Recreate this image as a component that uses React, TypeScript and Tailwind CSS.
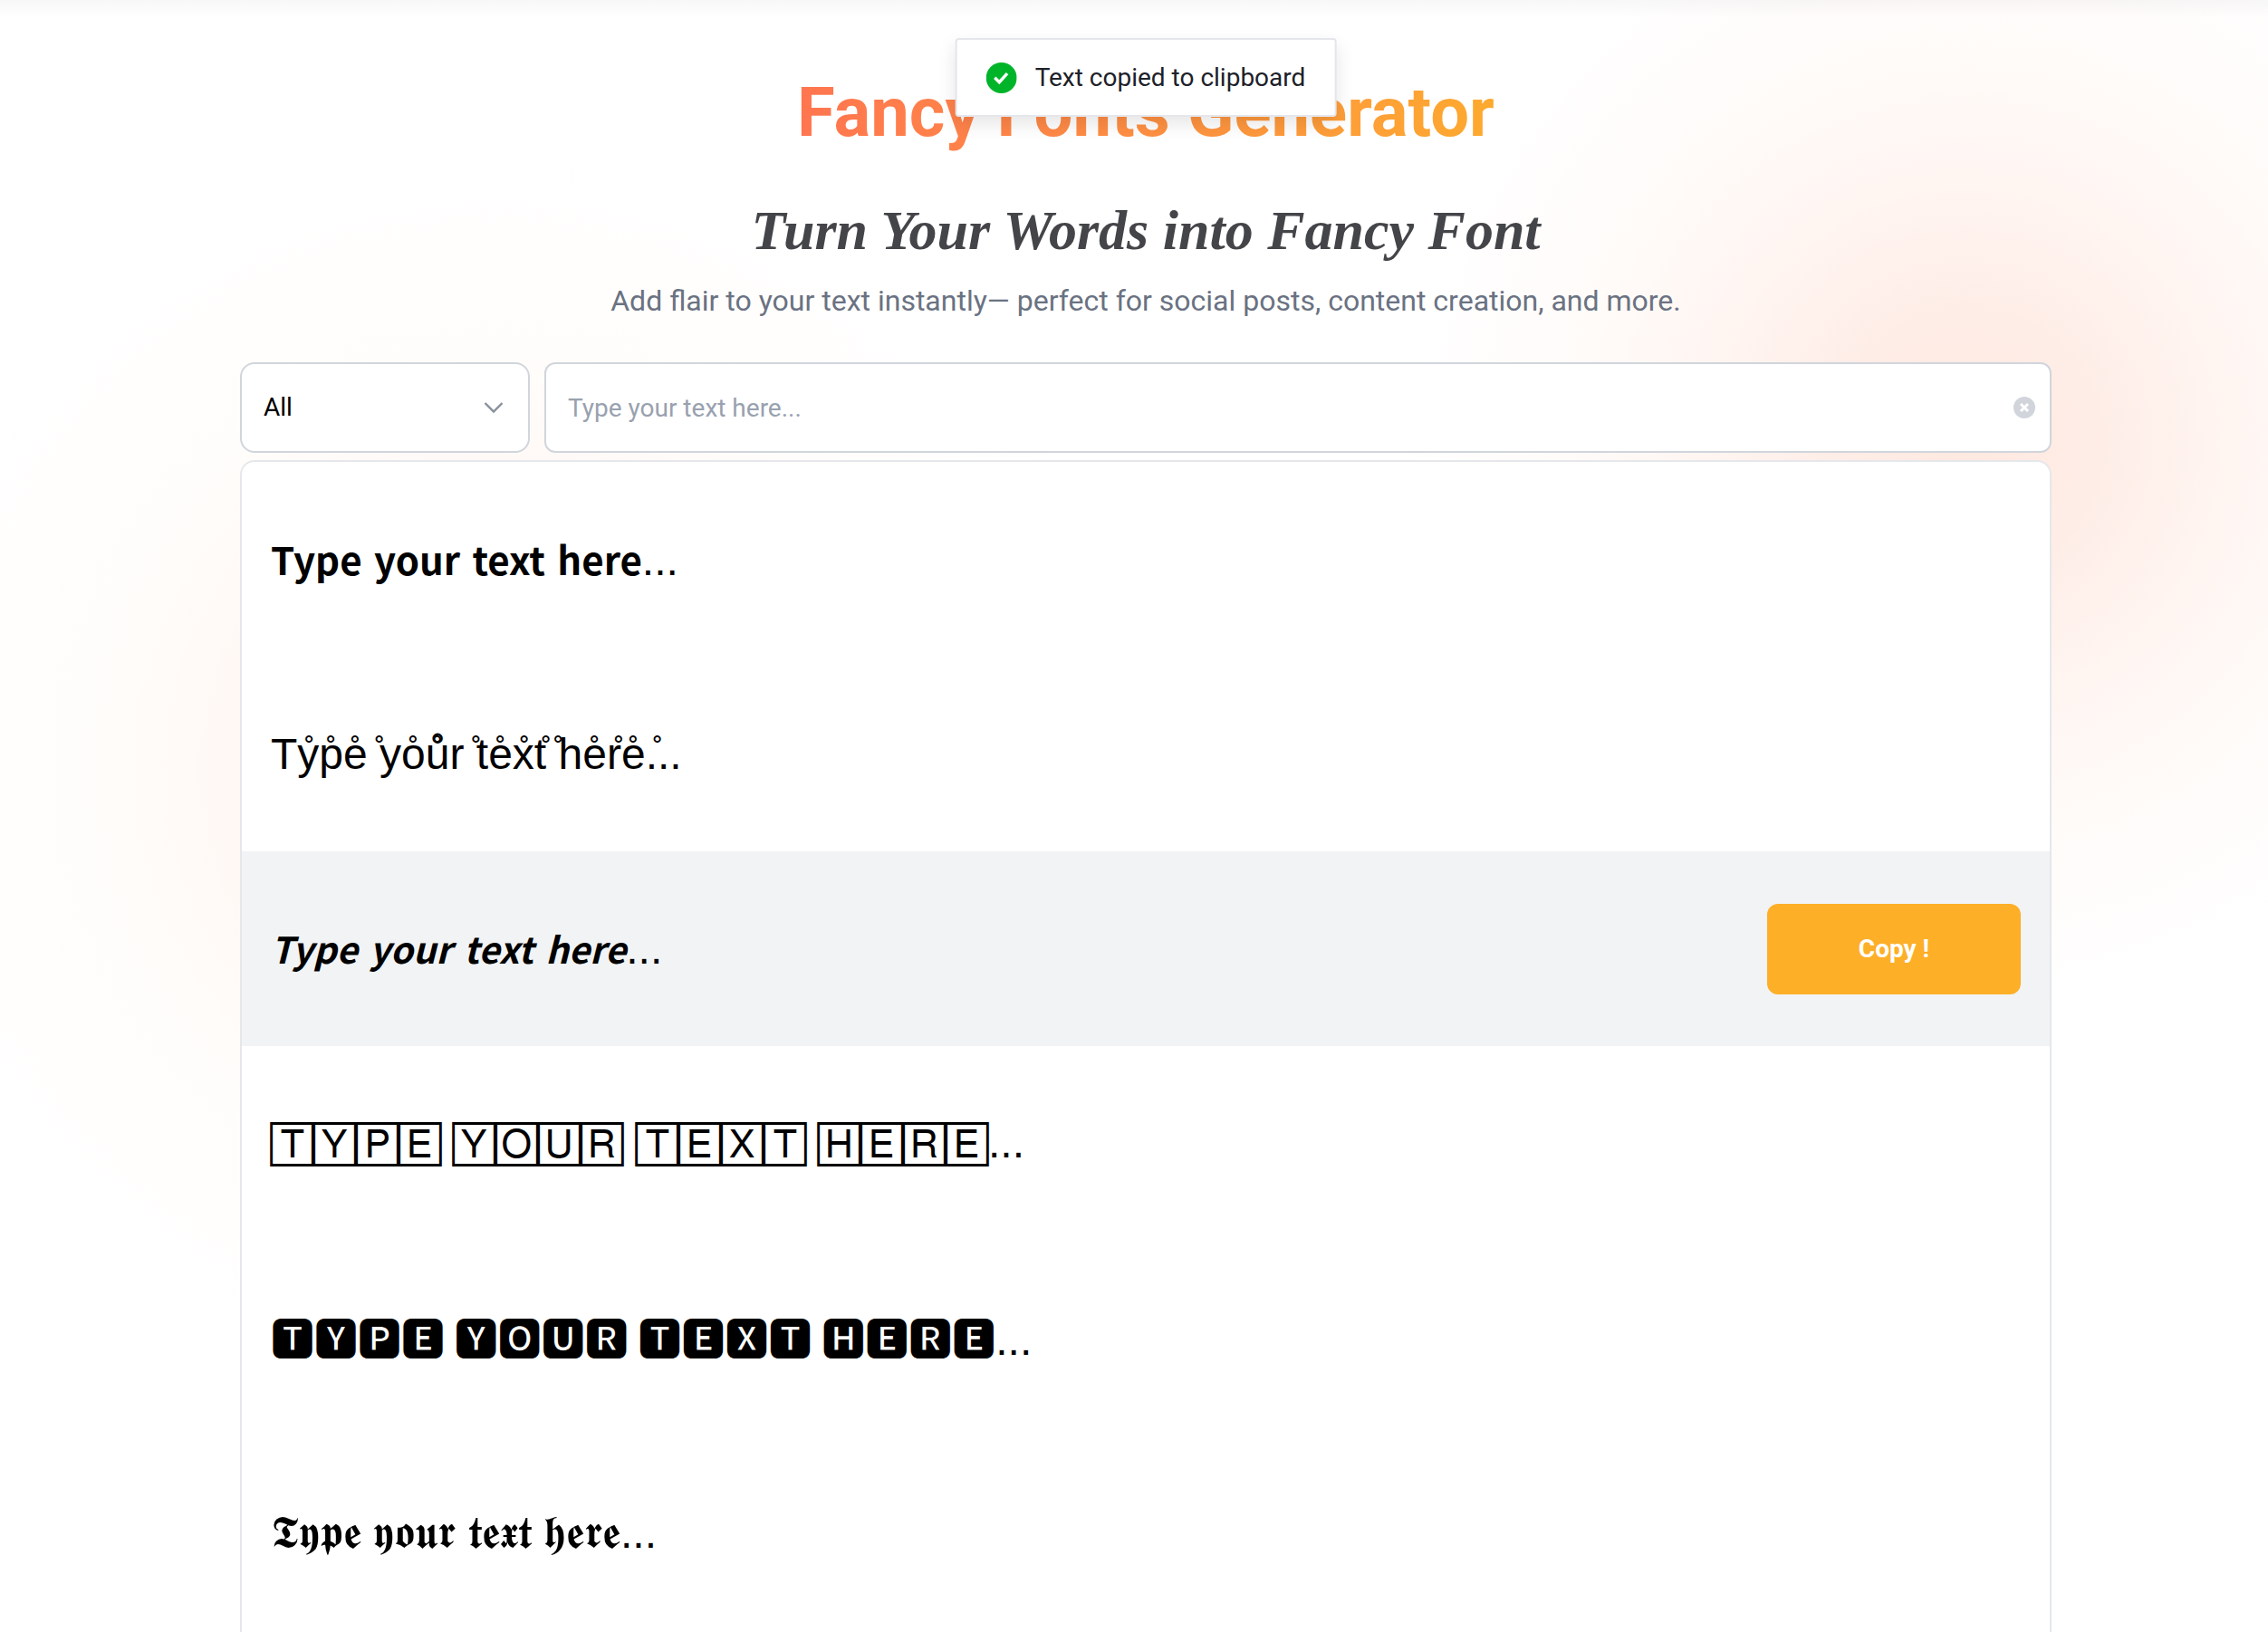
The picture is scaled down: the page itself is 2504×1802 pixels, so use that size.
import React from 'react';

const PLACEHOLDER = 'Type your text here...';

const CheckIcon = () => (
  <svg viewBox="0 0 34 34" className="size-[34px] shrink-0" aria-hidden="true">
    <circle cx="17" cy="17" r="17" fill="#00b42a" />
    <path d="M9.6 16.8l5 4.9 8.8-9.6" fill="none" stroke="#fff" strokeWidth="3.4" />
  </svg>
);

const ClearIcon = () => (
  <svg viewBox="0 0 24 24" className="size-6" aria-hidden="true">
    <circle cx="12" cy="12" r="12" fill="#d1d5db" />
    <path d="M8 8l8 8M16 8l-8 8" stroke="#fff" strokeWidth="3" />
  </svg>
);

const ChevronIcon = () => (
  <svg viewBox="0 0 24 24" className="size-6" aria-hidden="true">
    <path d="M2.5 7l9.5 9.5L21.5 7" fill="none" stroke="#86909c" strokeWidth="2.4" />
  </svg>
);

// styles the words only, so the gaps between them keep the row's own width
const Words: React.FC<{ text: string; className: string }> = ({ text, className }) => (
  <>
    {text.split(' ').map((word, i) => (
      <React.Fragment key={i}>
        {i > 0 && ' '}
        <span className={className}>{word}</span>
      </React.Fragment>
    ))}
  </>
);

// every plain letter carries a small ring that hangs over the start of the next one
const RingText: React.FC<{ text: string }> = ({ text }) => (
  <>
    {Array.from(text).map((char, i) => (
      <React.Fragment key={i}>
        {char}
        {/[a-zA-Z]/.test(char) && (
          <span className="inline-block w-0 align-[10px] indent-2 text-[34px] leading-none">˚</span>
        )}
      </React.Fragment>
    ))}
  </>
);

interface FontStyle {
  id: string;
  sample: React.ReactNode;
}

const styles: FontStyle[] = [
  {
    id: 'bold-sans',
    sample: <Words text="Type your text here" className="text-[42px] font-bold font-['Noto_Sans_CJK_SC',sans-serif]" />,
  },
  { id: 'ring', sample: <RingText text="Type yoůr text here" /> },
  {
    id: 'bold-italic',
    sample: (
      <Words text="Type your text here" className="text-[40px] font-bold italic font-['Noto_Sans_CJK_SC',sans-serif]" />
    ),
  },
  { id: 'square', sample: <Words text="🅃🅈🄿🄴 🅈🄾🅄🅁 🅃🄴🅇🅃 🄷🄴🅁🄴" className="text-[43px]" /> },
  {
    id: 'square-filled',
    sample: <span className="font-['Noto_Sans_CJK_SC',sans-serif]">🆃🆈🅿🅴 🆈🅾🆄🆁 🆃🅴🆇🆃 🅷🅴🆁🅴</span>,
  },
  { id: 'fraktur', sample: <Words text="𝕿𝖞𝖕𝖊 𝖞𝖔𝖚𝖗 𝖙𝖊𝖝𝖙 𝖍𝖊𝖗𝖊" className="text-[50px]" /> },
];

const FontRow: React.FC<{ style: FontStyle; active: boolean }> = ({ style, active }) => (
  <li className={`flex h-[215px] items-center justify-between px-8 ${active ? 'bg-[#f2f3f5]' : ''}`}>
    <p className="text-5xl leading-[56px] text-black font-['Liberation_Sans',sans-serif]">{style.sample}...</p>
    {active && (
      <button type="button" className="h-[100px] w-[280px] rounded-xl bg-[#fdaf28] text-[28px] font-bold text-white">
        Copy !
      </button>
    )}
  </li>
);

const Toast = () => (
  <div
    role="status"
    className="absolute top-[42px] left-1/2 flex h-[87px] -translate-x-1/2 items-center gap-5 rounded border-2 border-[#e5e6eb] bg-white px-8 text-[28px] whitespace-nowrap text-[#1d2129] shadow-[0_8px_20px_rgba(0,0,0,0.1)]"
  >
    <CheckIcon />
    Text copied to clipboard
  </div>
);

export default function App() {
  return (
    <div className="min-h-screen overflow-hidden bg-white bg-[radial-gradient(circle_620px_at_86.7%_490px,#ffe9e0_0%,#feede7_24%,#fff5f1_46%,#fffbf9_70%,#ffffff00_100%),radial-gradient(circle_700px_at_22%_850px,#fff1ed_0%,#fff8f5_42%,#fffdfb_66%,#ffffff00_100%)] font-['Roboto',sans-serif]">
      <div className="bg-linear-to-b from-black/3 to-transparent to-[20px] pl-[26px]">
        <div className="relative">
          <main className="mx-auto flex max-w-[2000px] flex-col pt-20">
            <header className="flex flex-col items-center text-center">
              <h1 className="bg-linear-to-r from-[#ff754f] to-[#fda92e] bg-clip-text text-[76px] leading-[88px] font-bold text-transparent">
                Fancy Fonts Generator
              </h1>
              <h2 className="mt-14 text-[62px] leading-[60px] font-bold italic text-[#444549] font-['Liberation_Serif',serif]">
                Turn Your Words into Fancy Font
              </h2>
              <p className="mt-7 text-[32px] leading-10 text-gray-500">
                Add flair to your text instantly— perfect for social posts, content creation, and more.
              </p>
            </header>

            <div className="mt-12 flex gap-4 text-[28px]">
              <div className="relative w-80 shrink-0">
                <select
                  aria-label="Category"
                  className="h-[100px] w-full appearance-none rounded-2xl border-2 border-gray-300 bg-white px-6 text-black"
                >
                  <option>All</option>
                </select>
                <span className="pointer-events-none absolute inset-y-0 right-7 flex items-center">
                  <ChevronIcon />
                </span>
              </div>
              <div className="relative flex-1">
                <input
                  type="text"
                  aria-label="Your text"
                  placeholder={PLACEHOLDER}
                  className="h-[100px] w-full rounded-xl border-2 border-gray-300 bg-white px-6 placeholder:text-gray-400"
                />
                <button type="button" aria-label="Clear" className="absolute inset-y-0 right-[18px] flex items-center">
                  <ClearIcon />
                </button>
              </div>
            </div>

            <ul className="mt-2 overflow-hidden rounded-t-2xl border-2 border-b-0 border-gray-200 bg-white pb-2">
              {styles.map((style) => (
                <FontRow key={style.id} style={style} active={style.id === 'bold-italic'} />
              ))}
            </ul>
          </main>
          <Toast />
        </div>
      </div>
    </div>
  );
}
